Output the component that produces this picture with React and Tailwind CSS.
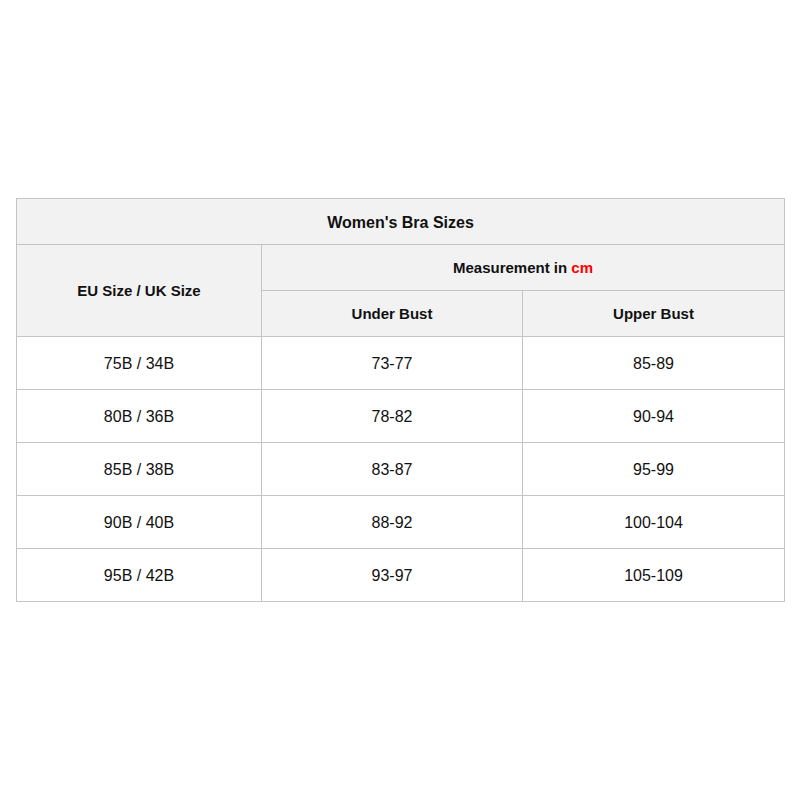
import React from 'react';

const rows = [
  ['75B / 34B', '73-77', '85-89'],
  ['80B / 36B', '78-82', '90-94'],
  ['85B / 38B', '83-87', '95-99'],
  ['90B / 40B', '88-92', '100-104'],
  ['95B / 42B', '93-97', '105-109'],
];

const cell = 'border border-[#c4c4c4] text-center align-middle px-0 pt-[2px] pb-0';

export default function App() {
  return (
    <div className="min-h-[800px] bg-white pt-[198px] pl-[16px] font-['Liberation_Sans',Arial,sans-serif] text-[#111]">
      <table className="border-collapse w-[768px] table-fixed">
        <colgroup>
          <col className="w-[245px]" />
          <col className="w-[261px]" />
          <col className="w-[262px]" />
        </colgroup>
        <thead className="bg-[#f2f2f2] text-[15px] font-bold">
          <tr className="h-[46px]">
            <th colSpan={3} className={`${cell} text-[16px]`}>Women's Bra Sizes</th>
          </tr>
          <tr className="h-[46px]">
            <th rowSpan={2} className={cell}>EU Size / UK Size</th>
            <th colSpan={2} className={cell}>
              Measurement in <span className="text-[#f00]">cm</span>
            </th>
          </tr>
          <tr className="h-[46px]">
            <th className={cell}>Under Bust</th>
            <th className={cell}>Upper Bust</th>
          </tr>
        </thead>
        <tbody className="text-[16px]">
          {rows.map((r) => (
            <tr key={r[0]} className="h-[53px]">
              {r.map((v, i) => (
                <td key={i} className={cell}>{v}</td>
              ))}
            </tr>
          ))}
        </tbody>
      </table>
    </div>
  );
}
